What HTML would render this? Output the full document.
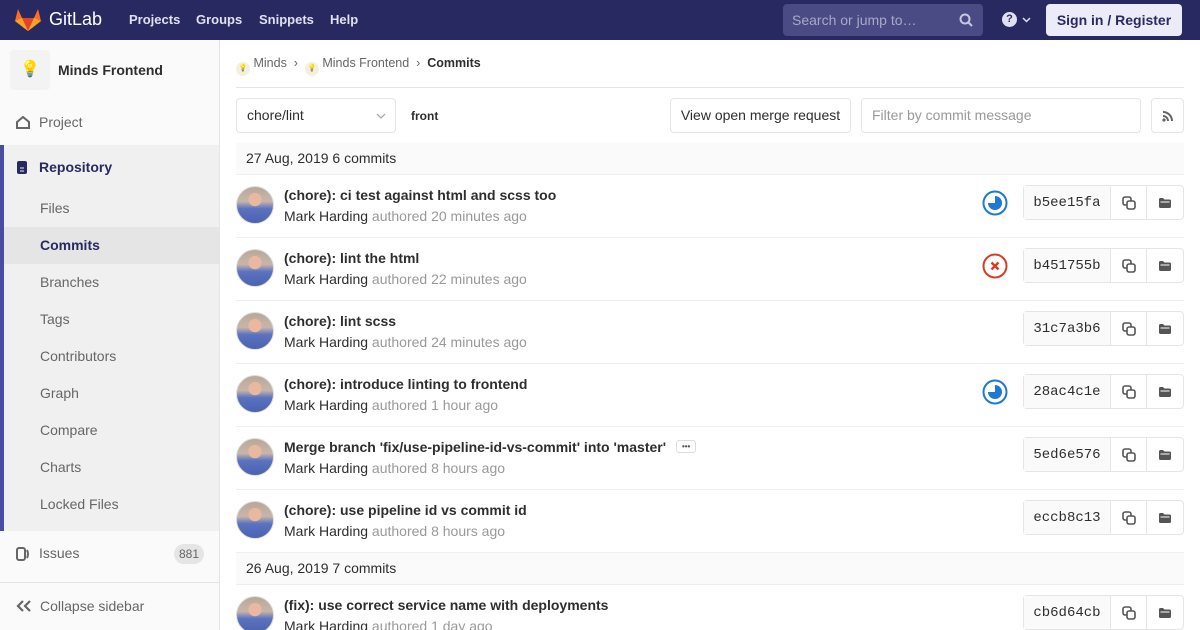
<!DOCTYPE html>
<html><head><meta charset="utf-8"><style>
*{box-sizing:border-box;margin:0;padding:0}
html{width:1200px;height:630px;overflow:hidden}
body{width:1200px;height:630px;overflow:hidden;font-family:"Liberation Sans",sans-serif;background:#fff;color:#2e2e2e;position:relative;font-size:14px}
.a{position:absolute}
.hdr{left:0;top:0;width:1200px;height:40px;background:#292961}
.nav{color:#e0e0f0;font-weight:bold;font-size:13px;top:12px}
.side{left:0;top:40px;width:220px;height:590px;background:#fafafa;border-right:1px solid #e5e5e5}
.si{left:40px;color:#666;font-size:14px}
.row{left:236px;width:948px;height:63px;border-bottom:1px solid #eee}
.av{position:absolute;left:0;top:11px;width:38px;height:38px;border-radius:50%;background:radial-gradient(circle at 50% 35%,#e8b8a0 0 22%,transparent 23%),linear-gradient(180deg,#b8a898 0%,#c9b5a8 40%,#5b72c0 60%,#4a62b0 100%);border:1px solid #ddd}
.t{position:absolute;left:48px;top:12px;font-weight:bold;font-size:14px;color:#2e2e2e}
.au{position:absolute;left:48px;top:33px;font-size:14px;color:#2e2e2e}
.au span{color:#999}
.hb{position:absolute;left:787px;top:10px;width:161px;height:35px;border:1px solid #e5e5e5;border-radius:4px;display:flex}
.hb div{border-left:1px solid #e5e5e5;width:37px;display:flex;align-items:center;justify-content:center}
.hb .h{border:0;width:87px;background:#fafafa;font-family:"Liberation Mono",monospace;font-size:14px;color:#2e2e2e;justify-content:center}
.dh{left:236px;width:948px;height:32px;background:#fafafa;border-bottom:1px solid #eee;padding:7px 10px;font-size:14px}
.st{position:absolute;left:746px;top:15px}
</style></head><body>
<div class="a hdr"></div>
<svg class="a" style="left:15px;top:9px" width="26" height="22" viewBox="0 0 26 22"><path d="M13 22L0 12 3 0 7 9h12l4-9 3 12z" fill="#fc6d26"/><path d="M13 22L7 9h12z" fill="#e24329"/><path d="M0 12l7-3 6 13z" fill="#fca326"/><path d="M26 12l-7-3-6 13z" fill="#fca326"/></svg>
<div class="a" style="left:49px;top:9px;color:#fff;font-size:18px">GitLab</div>
<div class="a nav" style="left:129px">Projects</div>
<div class="a nav" style="left:196px">Groups</div>
<div class="a nav" style="left:259px">Snippets</div>
<div class="a nav" style="left:330px">Help</div>
<div class="a" style="left:783px;top:4px;width:200px;height:32px;background:#4a4a84;border-radius:4px;color:#a8a8c8;font-size:14px;padding:8px 9px">Search or jump to…</div>
<svg class="a" style="left:959px;top:13px" width="14" height="14"><circle cx="6" cy="6" r="4.5" fill="none" stroke="#c8c8e0" stroke-width="2"/><path d="M9 9l4 4" stroke="#c8c8e0" stroke-width="2"/></svg>
<div class="a" style="left:1002px;top:12px;width:15px;height:15px;border-radius:50%;background:#e0e0f0;color:#292961;font-size:11px;font-weight:bold;text-align:center;line-height:15px">?</div>
<svg class="a" style="left:1022px;top:17px" width="9" height="6"><path d="M1 1l3.5 3.5L8 1" fill="none" stroke="#e0e0f0" stroke-width="1.5"/></svg>
<div class="a" style="left:1046px;top:4px;width:136px;height:32px;background:#ececf8;border-radius:4px;color:#292961;font-weight:bold;font-size:14px;text-align:center;line-height:32px">Sign in / Register</div>

<div class="a side"></div>
<div class="a" style="left:10px;top:50px;width:40px;height:40px;background:#f3f3f3;border-radius:4px;text-align:center;line-height:40px;font-size:16px">💡</div>
<div class="a" style="left:58px;top:62px;font-weight:bold;font-size:14px">Minds Frontend</div>
<svg class="a" style="left:16px;top:116px" width="14" height="13"><path d="M1 6L7 1l6 5v6H1z" fill="none" stroke="#666" stroke-width="2"/></svg>
<div class="a si" style="left:39px;top:114px">Project</div>
<div class="a" style="left:0;top:145px;width:219px;height:386px;background:#f0f0f0;border-left:4px solid #4b4ba3"></div>
<div class="a" style="left:4px;top:227px;width:215px;height:37px;background:#e5e5e5"></div>
<svg class="a" style="left:16px;top:160px" width="12" height="15"><rect x="1" y="1" width="10" height="13" rx="2" fill="#292961"/><path d="M4 8h4M4 11h4" stroke="#f0f0f0"/></svg>
<div class="a" style="left:39px;top:159px;color:#292961;font-weight:bold">Repository</div>
<div class="a si" style="top:200px">Files</div>
<div class="a si" style="top:237px;color:#292961;font-weight:bold">Commits</div>
<div class="a si" style="top:274px">Branches</div>
<div class="a si" style="top:311px">Tags</div>
<div class="a si" style="top:348px">Contributors</div>
<div class="a si" style="top:385px">Graph</div>
<div class="a si" style="top:422px">Compare</div>
<div class="a si" style="top:459px">Charts</div>
<div class="a si" style="top:496px">Locked Files</div>
<svg class="a" style="left:16px;top:547px" width="14" height="14"><rect x="1" y="1" width="8" height="12" rx="2" fill="none" stroke="#666" stroke-width="2"/><path d="M11 3q2 4 0 8" fill="none" stroke="#666" stroke-width="2"/></svg>
<div class="a si" style="left:39px;top:545px">Issues</div>
<div class="a" style="left:174px;top:544px;width:30px;height:20px;border-radius:10px;background:#e5e5e5;color:#666;font-size:12px;text-align:center;line-height:20px">881</div>
<div class="a" style="left:0;top:582px;width:219px;border-top:1px solid #e5e5e5"></div>
<svg class="a" style="left:16px;top:600px" width="16" height="12"><path d="M7 1L2 6l5 5M14 1L9 6l5 5" fill="none" stroke="#666" stroke-width="2.2"/></svg>
<div class="a si" style="top:598px">Collapse sidebar</div>

<div class="a" style="left:236px;top:56px;font-size:12.5px;color:#666;white-space:nowrap"><span style="display:inline-block;width:14px;height:14px;border-radius:50%;background:#f3f0e0;vertical-align:-3px;font-size:7px;text-align:center;line-height:14px">💡</span> Minds &nbsp;›&nbsp; <span style="display:inline-block;width:14px;height:14px;border-radius:50%;background:#f3f0e0;vertical-align:-3px;font-size:7px;text-align:center;line-height:14px">💡</span> Minds Frontend &nbsp;›&nbsp; <b style="color:#2e2e2e">Commits</b></div>
<div class="a" style="left:236px;top:87px;width:948px;border-top:1px solid #e5e5e5"></div>
<div class="a" style="left:236px;top:98px;width:160px;height:35px;border:1px solid #e5e5e5;border-radius:4px;padding:8px 10px">chore/lint<svg style="position:absolute;right:9px;top:14px" width="10" height="6"><path d="M1 1l4 4 4-4" fill="none" stroke="#aaa" stroke-width="1.3"/></svg></div>
<div class="a" style="left:411px;top:109px;font-size:12px;font-weight:bold">front</div>
<div class="a" style="left:670px;top:98px;width:181px;height:35px;border:1px solid #e5e5e5;border-radius:4px;padding:8px 0;text-align:center;white-space:nowrap">View open merge request</div>
<div class="a" style="left:861px;top:98px;width:280px;height:35px;border:1px solid #e5e5e5;border-radius:4px;padding:8px 10px;color:#999">Filter by commit message</div>
<div class="a" style="left:1151px;top:98px;width:33px;height:35px;border:1px solid #e5e5e5;border-radius:4px"><svg style="margin:11px 10px" width="12" height="12"><circle cx="2" cy="10" r="1.6" fill="#666"/><path d="M1 6a5 5 0 0 1 5 5M1 2a9 9 0 0 1 9 9" fill="none" stroke="#666" stroke-width="2"/></svg></div>

<div class="a dh" style="top:143px">27 Aug, 2019 6 commits</div>

<svg width="0" height="0" style="position:absolute"><defs>
<symbol id="cp" viewBox="0 0 14 14"><rect x="1" y="1" width="8" height="8" rx="2" fill="none" stroke="#555" stroke-width="1.6"/><rect x="5" y="5" width="8" height="8" rx="2" fill="#fff" stroke="#555" stroke-width="1.6"/></symbol>
<symbol id="fd" viewBox="0 0 14 12"><path d="M1 2.5Q1 1 2.5 1H5l1.5 1.5h5Q13 2.5 13 4v5.5Q13 11 11.5 11h-9Q1 11 1 9.5z" fill="#555"/><path d="M2.5 5h9" stroke="#fff" stroke-width="1"/></symbol>
<symbol id="run" viewBox="0 0 26 26"><circle cx="13" cy="13" r="11.5" fill="#fff" stroke="#1f78d1" stroke-width="2"/><path d="M13 6a7 7 0 1 1-7 7h7z" fill="#1f78d1"/></symbol>
<symbol id="fail" viewBox="0 0 26 26"><circle cx="13" cy="13" r="11.5" fill="#fff" stroke="#db3b21" stroke-width="2"/><path d="M9.5 9.5l7 7M16.5 9.5l-7 7" stroke="#db3b21" stroke-width="2.4"/></symbol>
</defs></svg>

<div class="a row" style="top:175px"><div class="av"></div><div class="t">(chore): ci test against html and scss too</div><div class="au">Mark Harding <span>authored 20 minutes ago</span></div><svg class="st" width="26" height="26"><use href="#run"/></svg><div class="hb"><div class="h">b5ee15fa</div><div><svg width="14" height="14"><use href="#cp"/></svg></div><div><svg width="14" height="12"><use href="#fd"/></svg></div></div></div>
<div class="a row" style="top:238px"><div class="av"></div><div class="t">(chore): lint the html</div><div class="au">Mark Harding <span>authored 22 minutes ago</span></div><svg class="st" width="26" height="26"><use href="#fail"/></svg><div class="hb"><div class="h">b451755b</div><div><svg width="14" height="14"><use href="#cp"/></svg></div><div><svg width="14" height="12"><use href="#fd"/></svg></div></div></div>
<div class="a row" style="top:301px"><div class="av"></div><div class="t">(chore): lint scss</div><div class="au">Mark Harding <span>authored 24 minutes ago</span></div><div class="hb"><div class="h">31c7a3b6</div><div><svg width="14" height="14"><use href="#cp"/></svg></div><div><svg width="14" height="12"><use href="#fd"/></svg></div></div></div>
<div class="a row" style="top:364px"><div class="av"></div><div class="t">(chore): introduce linting to frontend</div><div class="au">Mark Harding <span>authored 1 hour ago</span></div><svg class="st" width="26" height="26"><use href="#run"/></svg><div class="hb"><div class="h">28ac4c1e</div><div><svg width="14" height="14"><use href="#cp"/></svg></div><div><svg width="14" height="12"><use href="#fd"/></svg></div></div></div>
<div class="a row" style="top:427px"><div class="av"></div><div class="t">Merge branch 'fix/use-pipeline-id-vs-commit' into 'master' <span style="display:inline-block;margin-left:6px;border:1px solid #ddd;border-radius:3px;font-size:8px;padding:1px 5px;vertical-align:3px;color:#555">•••</span></div><div class="au">Mark Harding <span>authored 8 hours ago</span></div><div class="hb"><div class="h">5ed6e576</div><div><svg width="14" height="14"><use href="#cp"/></svg></div><div><svg width="14" height="12"><use href="#fd"/></svg></div></div></div>
<div class="a row" style="top:490px"><div class="av"></div><div class="t">(chore): use pipeline id vs commit id</div><div class="au">Mark Harding <span>authored 8 hours ago</span></div><div class="hb"><div class="h">eccb8c13</div><div><svg width="14" height="14"><use href="#cp"/></svg></div><div><svg width="14" height="12"><use href="#fd"/></svg></div></div></div>
<div class="a dh" style="top:553px">26 Aug, 2019 7 commits</div>
<div class="a row" style="top:585px"><div class="av"></div><div class="t">(fix): use correct service name with deployments</div><div class="au">Mark Harding <span>authored 1 day ago</span></div><div class="hb"><div class="h">cb6d64cb</div><div><svg width="14" height="14"><use href="#cp"/></svg></div><div><svg width="14" height="12"><use href="#fd"/></svg></div></div></div>
</body></html>
